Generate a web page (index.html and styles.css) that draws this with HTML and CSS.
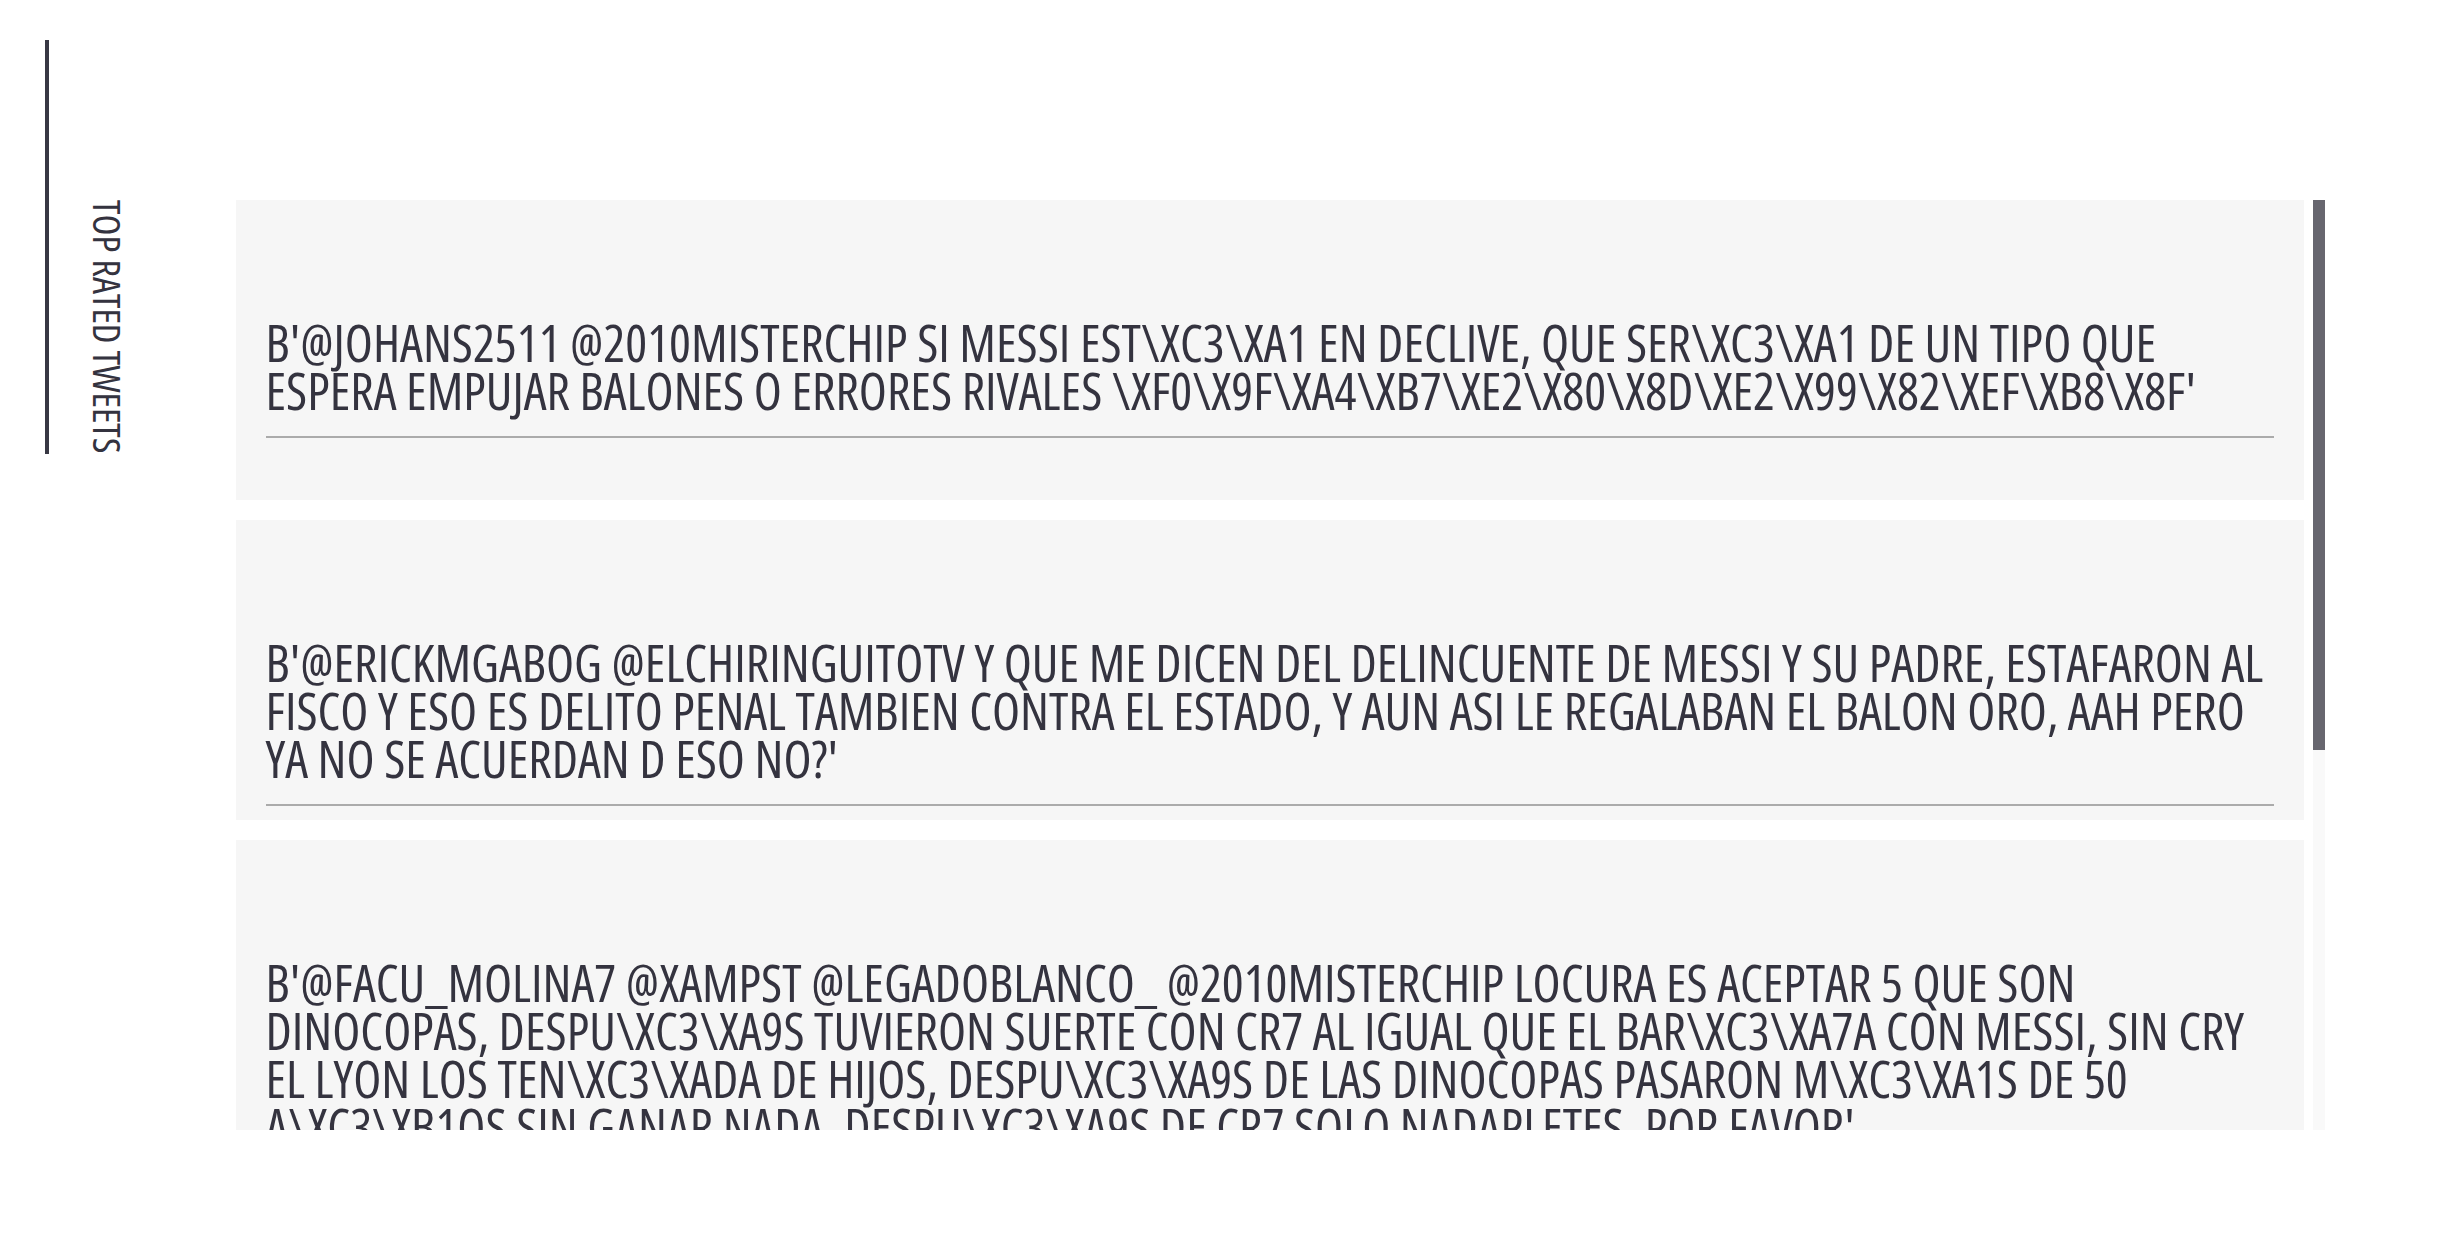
FILE: index.html
```html
<!DOCTYPE html>
<html lang="es">
<head>
<meta charset="utf-8">
<title>Top Rated Tweets</title>
<link rel="stylesheet" href="styles.css">
</head>
<body>
<div class="page">
  <aside class="side">
    <h2 class="side-title">TOP RATED TWEETS</h2>
  </aside>
  <section class="feed-wrap">
    <main class="feed">
      <article class="card">
        <p class="tweet">B'@JOHANS2511 @2010MISTERCHIP SI MESSI EST\XC3\XA1 EN DECLIVE, QUE SER\XC3\XA1 DE UN TIPO QUE ESPERA EMPUJAR BALONES O ERRORES RIVALES \XF0\X9F\XA4\XB7\XE2\X80\X8D\XE2\X99\X82\XEF\XB8\X8F'</p>
        <div class="rule"></div>
      </article>
      <article class="card">
        <p class="tweet">B'@ERICKMGABOG @ELCHIRINGUITOTV Y QUE ME DICEN DEL DELINCUENTE DE MESSI Y SU PADRE, ESTAFARON AL FISCO Y ESO ES DELITO PENAL TAMBIEN CONTRA EL ESTADO, Y AUN ASI LE REGALABAN EL BALON ORO, AAH PERO YA NO SE ACUERDAN D ESO NO?'</p>
        <div class="rule"></div>
      </article>
      <article class="card">
        <p class="tweet">B'@FACU_MOLINA7 @XAMPST @LEGADOBLANCO_ @2010MISTERCHIP LOCURA ES ACEPTAR 5 QUE SON DINOCOPAS, DESPU\XC3\XA9S TUVIERON SUERTE CON CR7 AL IGUAL QUE EL BAR\XC3\XA7A CON MESSI, SIN CRY EL LYON LOS TEN\XC3\XADA DE HIJOS, DESPU\XC3\XA9S DE LAS DINOCOPAS PASARON M\XC3\XA1S DE 50 A\XC3\XB1OS SIN GANAR NADA, DESPU\XC3\XA9S DE CR7 SOLO NADAPLETES, POR FAVOR'</p>
        <div class="rule"></div>
      </article>
      <article class="card">
        <p class="tweet">B'@SPORTSCENTERLA MESSI ES EL MEJOR DE LA HISTORIA Y NO HAY DISCUSI\XC3\XB3N'</p>
        <div class="rule"></div>
      </article>
      <article class="card">
        <p class="tweet">B'@ELCHIRINGUITOTV CON MESSI EN EL CAMPO TODO ES POSIBLE \XE2\X9A\XBD'</p>
        <div class="rule"></div>
      </article>
    </main>
    <div class="scrollbar" aria-hidden="true"><div class="thumb"></div></div>
  </section>
</div>
</body>
</html>
```
FILE: styles.css
```css
html, body {
  margin: 0;
  padding: 0;
  background: #ffffff;
}

body {
  font-family: "Open Sans", "Liberation Sans", sans-serif;
  font-stretch: 75%;
  color: #34333f;
}

.page {
  display: flex;
  align-items: flex-start;
  padding: 40px 0 0 45px;
}

.side {
  flex: none;
  display: flex;
  align-items: flex-end;
  height: 414px;
  padding-left: 39px;
  border-left: 4px solid #383844;
}

.side-title {
  margin: 0;
  writing-mode: vertical-rl;
  font-size: 38.5px;
  font-weight: 450;
  line-height: 1;
  color: #34333f;
  white-space: nowrap;
}

.feed-wrap {
  flex: none;
  display: flex;
  gap: 9px;
  margin: 160px 0 0 109px;
}

.feed {
  width: 2068px;
  height: 930px;
  overflow-y: auto;
  scrollbar-width: none;
}

.feed::-webkit-scrollbar {
  display: none;
}

.scrollbar {
  width: 12px;
  height: 930px;
  background: #f9f9f9;
}

.thumb {
  height: 550px;
  background: #67666f;
}

.card {
  box-sizing: border-box;
  min-height: 300px;
  margin-bottom: 20px;
  padding: 118px 30px 13px;
  background: #f6f6f6;
}

.tweet {
  margin: 0;
  font-size: 51.5px;
  line-height: 48px;
  font-weight: 450;
  color: #34333f;
}

.rule {
  height: 2px;
  margin-top: 22px;
  background: #ababab;
}
```
